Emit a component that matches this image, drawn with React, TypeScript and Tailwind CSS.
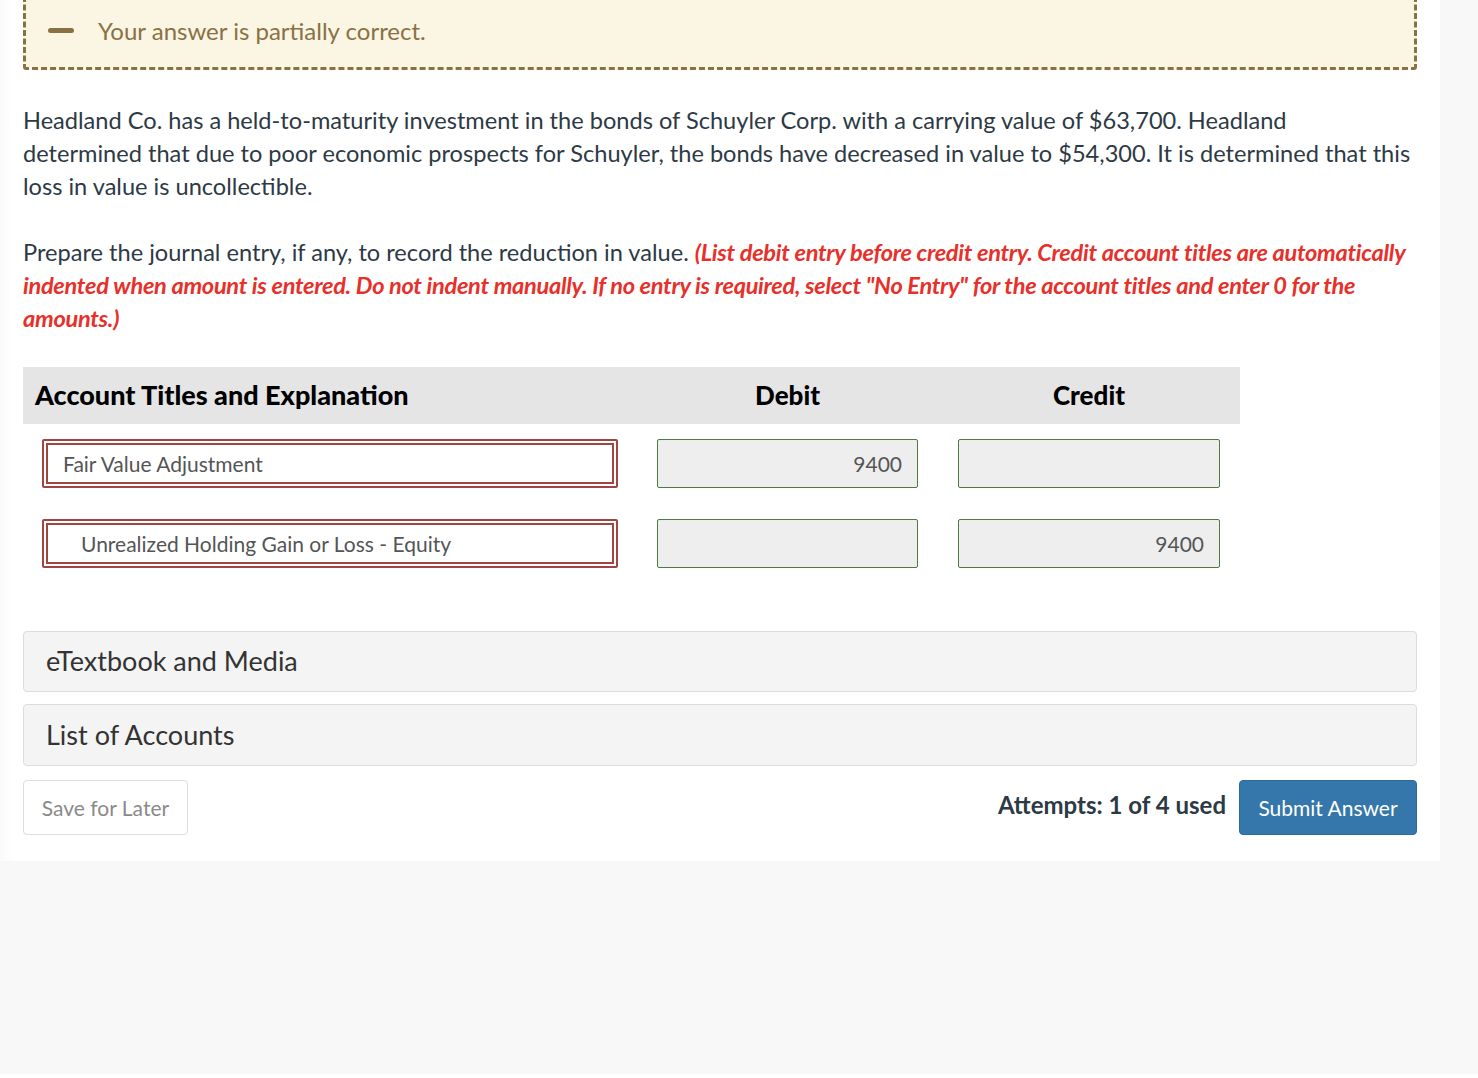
export default function App() {
  return (
    <div className="min-h-[1078px] w-full bg-[#f8f8f8] font-['Lato',sans-serif] text-[#2d3a45]">
      <div className="w-[1440px] bg-white px-[23px] pb-[26px] shadow-[inset_20px_0_20px_-20px_rgba(0,0,0,0.04)]">
        {/* feedback banner */}
        <div className="-mt-[4px] flex h-[74px] items-center gap-[24px] rounded-b-[3px] border-[3px] border-t-0 border-dashed border-[#8a7143] bg-[#faf6e3] pl-[22px]">
          <span className="mt-[-2px] block h-[5px] w-[26px] rounded-full bg-[#8a7143]" />
          <span className="mt-[-2px] text-[24px] text-[#8a7143]">Your answer is partially correct.</span>
        </div>

        <p className="-mr-[8px] mt-[34px] text-[23.6px] leading-[33px]">
          Headland Co. has a held-to-maturity investment in the bonds of Schuyler Corp. with a carrying value of $63,700. Headland
          <br />
          determined that due to poor economic prospects for Schuyler, the bonds have decreased in value to $54,300. It is determined that this
          <br />
          loss in value is uncollectible.
        </p>

        <p className="-mr-[8px] mt-[33px] text-[23.6px] leading-[33px]">
          Prepare the journal entry, if any, to record the reduction in value.{" "}
          <span className="font-bold italic tracking-[-0.3px] text-[#e8302a]">
            (List debit entry before credit entry. Credit account titles are automatically
            <br />
            indented when amount is entered. Do not indent manually. If no entry is required, select "No Entry" for the account titles and enter 0 for the
            <br />
            amounts.)
          </span>
        </p>

        {/* journal table */}
        <div className="mt-[32px] w-[1217px]">
          <div className="grid h-[57px] grid-cols-[614px_301px_302px] items-center bg-[#e5e5e5] text-[26px] font-black text-black">
            <div className="pl-[12px] text-[27px]">Account Titles and Explanation</div>
            <div className="text-center">Debit</div>
            <div className="text-center">Credit</div>
          </div>

          <JournalRow account="Fair Value Adjustment" debit="9400" credit="" indent={false} />
          <JournalRow account="Unrealized Holding Gain or Loss - Equity" debit="" credit="9400" indent />
        </div>

        {/* collapsible sections */}
        <div className="mt-[47px] flex h-[61px] items-center rounded-[4px] border border-[#dcdcdc] bg-[#f4f4f4] pl-[22px] text-[27px] text-[#333]">
          eTextbook and Media
        </div>
        <div className="mt-[12px] flex h-[62px] items-center rounded-[4px] border border-[#dcdcdc] bg-[#f4f4f4] pl-[22px] text-[27px] text-[#333]">
          List of Accounts
        </div>

        <div className="mt-[14px] flex items-center justify-between">
          <button className="h-[55px] w-[165px] rounded-[4px] border border-[#dddddd] bg-white text-[21px] text-[#8a8a8a]">
            Save for Later
          </button>
          <div className="flex items-center gap-[13px]">
            <span className="mb-[6px] text-[24px] font-bold text-[#2d3a45]">Attempts: 1 of 4 used</span>
            <button className="h-[55px] w-[178px] rounded-[4px] border border-[#2c6a9c] bg-[#3577aa] text-[21px] text-white">
              Submit Answer
            </button>
          </div>
        </div>
      </div>
    </div>
  );
}

function JournalRow({
  account,
  debit,
  credit,
  indent,
}: {
  account: string;
  debit: string;
  credit: string;
  indent: boolean;
}) {
  return (
    <div className="mt-[15px] grid grid-cols-[614px_301px_302px] pb-[16px]">
      <div className="pl-[19px] pr-[19px]">
        <div className="rounded-[2px] border-2 border-[#a0463f] p-[2px]">
          <div
            className={
              indent
                ? "flex h-[41px] items-center border-2 border-[#a0463f] pl-[33px] text-[21px] text-[#555]"
                : "flex h-[41px] items-center border-2 border-[#a0463f] pl-[15px] text-[21px] text-[#555]"
            }
          >
            {account}
          </div>
        </div>
      </div>
      <div className="px-[20px]">
        <div className="flex h-[49px] items-center justify-end rounded-[2px] border border-[#4f7a3e] bg-[#eeeeee] pr-[15px] text-[21px] text-[#555]">
          {debit}
        </div>
      </div>
      <div className="px-[20px]">
        <div className="flex h-[49px] items-center justify-end rounded-[2px] border border-[#4f7a3e] bg-[#eeeeee] pr-[15px] text-[21px] text-[#555]">
          {credit}
        </div>
      </div>
    </div>
  );
}
